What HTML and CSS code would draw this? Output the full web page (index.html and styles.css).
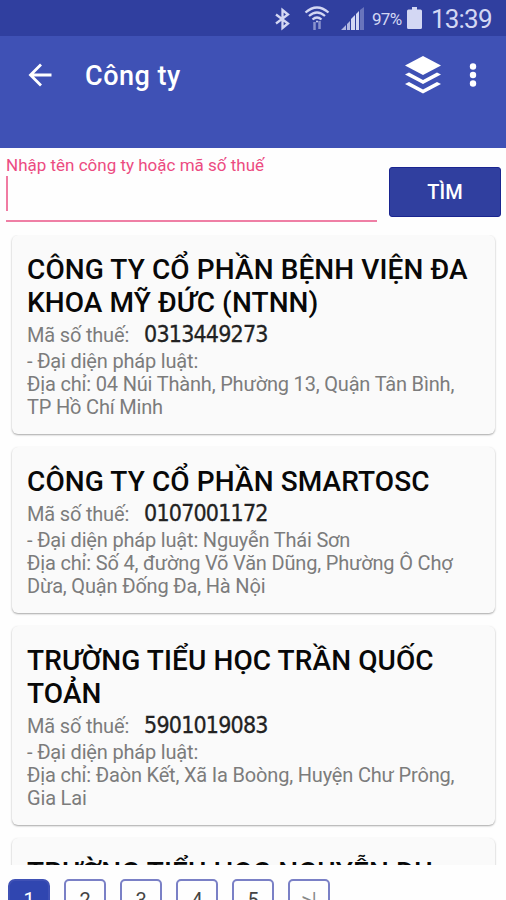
FILE: index.html
```html
<!DOCTYPE html>
<html lang="vi">
<head>
<meta charset="utf-8">
<title>Công ty</title>
<link rel="stylesheet" href="styles.css">
</head>
<body>
<div class="status">
  <svg class="bluetooth" width="18" height="24" viewBox="0 0 18 24" fill="none" stroke="currentColor" stroke-width="2.300"><path d="M2 7.500l12 9-5.500 4.500V3l5.500 4.500-12 9"/></svg>
  <svg class="wifi" width="26" height="26" viewBox="0 0 26 26" fill="none" stroke="currentColor" stroke-width="2.300"><path d="M1.500 7.500Q13-2.500 24.500 7.500M5 11q8-7 16 0M8.500 14.500q4.500-4 9 0"/><path d="M10.500 17v8M15.500 16v8" stroke-width="2.500" opacity=".55"/><circle cx="13" cy="16.500" r="1" fill="currentColor" stroke="none"/></svg>
  <svg class="signal" width="24" height="24" viewBox="0 0 24 24" fill="currentColor"><path d="M0 23l5-5v5zM6 17l3-3v9H6z" opacity=".8"/><path d="M10 12l4-4v15h-4zM15 7l3-3v19h-3z"/><path d="M19 3l4-3v23h-4z" opacity=".35"/></svg>
  <span class="percent">97%</span>
  <svg class="battery" width="15" height="22" viewBox="0 0 15 22" fill="currentColor"><path d="M5 0h5v2.500h3.500Q15 2.500 15 4v16.500Q15 22 13.500 22h-12Q0 22 0 20.500V4Q0 2.500 1.500 2.500H5z"/></svg>
  <span class="clock">13:39</span>
</div>
<header class="appbar">
  <svg class="back" width="24" height="24" viewBox="0 0 24 24" fill="none" stroke="currentColor" stroke-width="2.800"><path d="M23.500 12H2.500M13 1.500L2.500 12 13 22.500"/></svg>
  <h1 class="appbar-title">Công ty</h1>
  <svg class="layers" width="36" height="38" viewBox="0 0 36 38" fill="currentColor"><path d="M18 0l18 9.500L18 19 0 9.500z"/><path d="M0 18.500l4-2 14 7.500 14-7.500 4 2L18 28z"/><path d="M0 28l4-2 14 7.500L32 26l4 2-18 9.500z"/></svg>
  <svg class="more" width="8" height="26" viewBox="0 0 8 26" fill="currentColor"><circle cx="4" cy="4.500" r="3.200"/><circle cx="4" cy="13" r="3.200"/><circle cx="4" cy="21.500" r="3.200"/></svg>
</header>
<section class="search">
  <div class="field">
    <label class="label">Nhập tên công ty hoặc mã số thuế</label>
    <div class="caret"></div>
  </div>
  <button class="find">TÌM</button>
</section>
<main class="list">
  <article class="card">
    <h2 class="name">CÔNG TY CỔ PHẦN BỆNH VIỆN ĐA KHOA MỸ ĐỨC (NTNN)</h2>
    <p class="tax">Mã số thuế: <span class="code">0313449273</span></p>
    <p class="info">- Đại diện pháp luật:<br>Địa chỉ: 04 Núi Thành, Phường 13, Quận Tân Bình,<br>TP Hồ Chí Minh</p>
  </article>
  <article class="card">
    <h2 class="name">CÔNG TY CỔ PHẦN SMARTOSC</h2>
    <p class="tax">Mã số thuế: <span class="code">0107001172</span></p>
    <p class="info">- Đại diện pháp luật: Nguyễn Thái Sơn<br>Địa chỉ: Số 4, đường Võ Văn Dũng, Phường Ô Chợ<br>Dừa, Quận Đống Đa, Hà Nội</p>
  </article>
  <article class="card">
    <h2 class="name">TRƯỜNG TIỂU HỌC TRẦN QUỐC TOẢN</h2>
    <p class="tax">Mã số thuế: <span class="code">5901019083</span></p>
    <p class="info">- Đại diện pháp luật:<br>Địa chỉ: Đaòn Kết, Xã Ia Boòng, Huyện Chư Prông,<br>Gia Lai</p>
  </article>
  <article class="card">
    <h2 class="name">TRƯỜNG TIỂU HỌC NGUYỄN DU</h2>
  </article>
</main>
<nav class="pages">
  <span class="page current">1</span>
  <span class="page">2</span>
  <span class="page">3</span>
  <span class="page">4</span>
  <span class="page">5</span>
  <span class="page last">&gt;|</span>
</nav>
</body>
</html>
```

FILE: styles.css
```css
* { box-sizing: border-box; }
body {
  margin: 0;
  height: 900px;
  overflow: hidden;
  display: flex;
  flex-direction: column;
  background: #fefefe;
  font-family: Roboto, sans-serif;
}
svg { flex: none; display: block; }
h1, h2, p { margin: 0; }

.status {
  flex: none;
  height: 36px;
  padding: 2px 13px 0 0;
  display: flex;
  justify-content: flex-end;
  align-items: center;
  background: #303f9f;
  color: #d3d7f3;
}
.bluetooth { margin-right: 12px; }
.wifi { margin: -3px 11px 0 0; }
.signal { margin-right: 7px; }
.percent { width: 31px; margin-right: 4px; font-size: 17px; letter-spacing: -.7px; white-space: nowrap; }
.battery { margin: -2px 9px 0 0; }
.clock { width: 62px; font-size: 26px; letter-spacing: -.8px; white-space: nowrap; }

.appbar {
  flex: none;
  height: 112px;
  padding: 0 29px 0 28px;
  display: flex;
  align-items: flex-start;
  background: #3f51b5;
  color: #fff;
}
.back { margin-top: 27px; }
.appbar-title {
  flex: 1;
  margin: 23px 0 0 33px;
  font-size: 27px;
  font-weight: 500;
  line-height: 34px;
  letter-spacing: .5px;
}
.layers { margin: 20px 28px 0 0; }
.more { margin-top: 26px; }

.search {
  flex: none;
  height: 87px;
  padding: 8px 5px 0 6px;
  display: flex;
  justify-content: space-between;
}
.field { width: 371px; height: 66px; border-bottom: 2px solid #ef7fa5; }
.label { display: block; height: 20px; line-height: 18px; font-size: 17px; color: #ec4b81; white-space: nowrap; }
.caret { width: 2px; height: 35px; background: #f07ba2; }
.find {
  width: 112px;
  height: 50px;
  margin-top: 11px;
  padding: 0;
  border: 1px solid #1a2590;
  border-radius: 3px;
  background: #303f9f;
  color: #fff;
  font: 500 20px Roboto, sans-serif;
}

.list {
  flex: none;
  height: 630px;
  padding: 0 11px 0 12px;
  overflow: hidden;
  display: flex;
  flex-direction: column;
  gap: 13px;
}
.card {
  flex: none;
  padding: 18px 15px 15px;
  border-radius: 6px;
  background: #fafafa;
  box-shadow: 0 1px 2px rgba(0, 0, 0, .35);
}
.name { font-size: 28px; font-weight: 500; line-height: 33px; letter-spacing: .1px; color: #080808; }
.tax {
  display: flex;
  align-items: baseline;
  height: 31px;
  line-height: 30px;
  font-size: 20px;
  letter-spacing: -.18px;
  color: #7c7c7c;
}
.code {
  margin-left: 15px;
  font-family: "DejaVu Sans Condensed", "DejaVu Sans", sans-serif;
  font-stretch: condensed;
  font-size: 23px;
  letter-spacing: -.8px;
  color: #222;
  -webkit-text-stroke: .3px #222;
}
.info { font-size: 20px; line-height: 23px; letter-spacing: -.18px; color: #7c7c7c; white-space: nowrap; }

.pages { flex: none; display: flex; gap: 14px; padding: 14px 8px 0; }
.page {
  width: 42px;
  height: 42px;
  border: 2px solid #7a80c6;
  border-radius: 5px;
  font-size: 20px;
  line-height: 38px;
  text-align: center;
  color: #444;
}
.current { border-color: #3f51b5; border-radius: 7px; background: #3046b0; color: #fff; }
.last { color: #888; }
```
